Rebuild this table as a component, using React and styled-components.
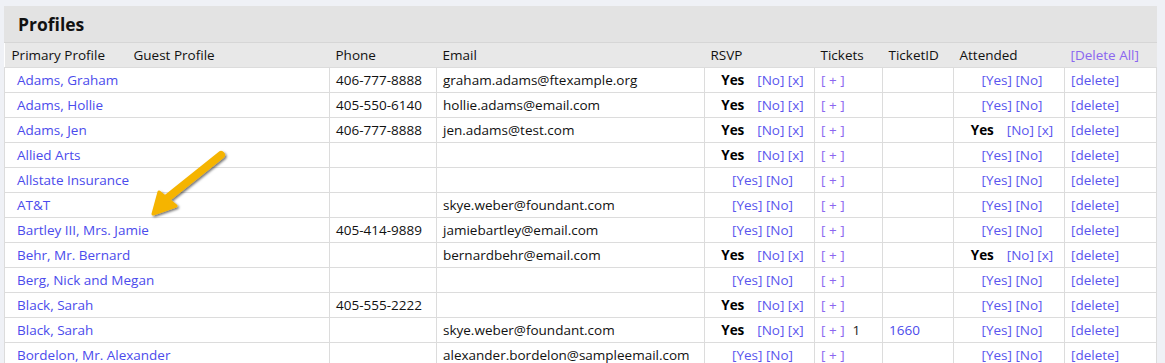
import React from 'react';
import styled, { createGlobalStyle } from 'styled-components';

const GlobalStyle = createGlobalStyle`
  html, body {
    margin: 0;
    padding: 0;
    background: #eff1f6;
    font-family: "Open Sans", "Noto Sans", sans-serif;
    font-size: 13.5px;
    color: #111;
  }
`;

const rows = [
  { name: 'Adams, Graham', phone: '406-777-8888', email: 'graham.adams@ftexample.org', rsvp: 'yes', att: 'open' },
  { name: 'Adams, Hollie', phone: '405-550-6140', email: 'hollie.adams@email.com', rsvp: 'yes', att: 'open' },
  { name: 'Adams, Jen', phone: '406-777-8888', email: 'jen.adams@test.com', rsvp: 'yes', att: 'yes' },
  { name: 'Allied Arts', phone: '', email: '', rsvp: 'yes', att: 'open' },
  { name: 'Allstate Insurance', phone: '', email: '', rsvp: 'open', att: 'open' },
  { name: 'AT&T', phone: '', email: 'skye.weber@foundant.com', rsvp: 'open', att: 'open' },
  { name: 'Bartley III, Mrs. Jamie', phone: '405-414-9889', email: 'jamiebartley@email.com', rsvp: 'open', att: 'open' },
  { name: 'Behr, Mr. Bernard', phone: '', email: 'bernardbehr@email.com', rsvp: 'yes', att: 'yes' },
  { name: 'Berg, Nick and Megan', phone: '', email: '', rsvp: 'open', att: 'open' },
  { name: 'Black, Sarah', phone: '405-555-2222', email: '', rsvp: 'yes', att: 'open' },
  { name: 'Black, Sarah', phone: '', email: 'skye.weber@foundant.com', rsvp: 'yes', att: 'open', tickets: '1', ticketId: '1660' },
  { name: 'Bordelon, Mr. Alexander', phone: '', email: 'alexander.bordelon@sampleemail.com', rsvp: 'open', att: 'open' },
];

const Page = styled.div`
  padding: 6px 8px 0 4px;
  position: relative;
`;

const Panel = styled.section`
  background: #fff;
  width: 1153px;
`;

const TitleBar = styled.div`
  background: #e3e3e3;
  height: 36px;
  display: flex;
  align-items: center;
  padding-left: 14px;
  border-bottom: 1px solid #d6d6d6;

  h1 {
    margin: 0;
    font-size: 17.5px;
    font-weight: 700;
    color: #111;
  }
`;

const Table = styled.table`
  width: 100%;
  border-collapse: collapse;
  table-layout: fixed;
`;

const Th = styled.th`
  background: #e8e8e8;
  font-weight: 400;
  text-align: left;
  height: 24px;
  padding: 0 0 0 ${p => p.$pad || 6}px;
  white-space: nowrap;
`;

const Td = styled.td`
  height: 24px;
  border: 1px solid #dcdcdc;
  padding: 0 0 0 ${p => p.$pad || 6}px;
  text-align: ${p => p.$center ? 'center' : 'left'};
  white-space: nowrap;
  overflow: hidden;
`;

const Link = styled.a`
  color: #4b4bec;
  text-decoration: none;
  cursor: pointer;
`;

const Bracket = styled(Link)`
  color: ${p => p.$purple ? '#8a66f0' : '#5a55ee'};
`;

const Yes = styled.b`
  display: inline-block;
  width: 36px;
  text-align: left;
  color: #000;
`;

const Plain = styled.span`
  margin-left: 8px;
  color: #222;
`;

const Arrow = styled.svg`
  position: absolute;
  left: 140px;
  top: 142px;
  pointer-events: none;
`;

const Choice = ({ value }) =>
  value === 'yes' ? (
    <>
      <Yes>Yes</Yes>
      <Bracket>[No]</Bracket> <Bracket>[x]</Bracket>
    </>
  ) : (
    <>
      <Bracket>[Yes]</Bracket> <Bracket>[No]</Bracket>
    </>
  );

export default function App() {
  return (
    <>
      <GlobalStyle />
      <Page>
        <Panel>
          <TitleBar>
            <h1>Profiles</h1>
          </TitleBar>
          <Table>
            <colgroup>
              <col style={{ width: 122 }} />
              <col style={{ width: 203 }} />
              <col style={{ width: 107 }} />
              <col style={{ width: 268 }} />
              <col style={{ width: 110 }} />
              <col style={{ width: 68 }} />
              <col style={{ width: 71 }} />
              <col style={{ width: 111 }} />
              <col />
            </colgroup>
            <thead>
              <tr>
                <Th $pad={7}>Primary Profile</Th>
                <Th $pad={7}>Guest Profile</Th>
                <Th>Phone</Th>
                <Th>Email</Th>
                <Th>RSVP</Th>
                <Th>Tickets</Th>
                <Th>TicketID</Th>
                <Th>Attended</Th>
                <Th><Bracket $purple>[Delete All]</Bracket></Th>
              </tr>
            </thead>
            <tbody>
              {rows.map((r, i) => (
                <tr key={i}>
                  <Td colSpan={2} $pad={12}><Link>{r.name}</Link></Td>
                  <Td>{r.phone}</Td>
                  <Td>{r.email}</Td>
                  <Td $center><Choice value={r.rsvp} /></Td>
                  <Td>
                    <Bracket $purple>[ + ]</Bracket>
                    {r.tickets && <Plain>{r.tickets}</Plain>}
                  </Td>
                  <Td $pad={6}>{r.ticketId && <Link>{r.ticketId}</Link>}</Td>
                  <Td $center><Choice value={r.att} /></Td>
                  <Td><Bracket>[delete]</Bracket></Td>
                </tr>
              ))}
            </tbody>
          </Table>
        </Panel>
        <Arrow width="100" height="80" viewBox="0 0 100 80">
          <defs>
            <filter id="sh" x="-20%" y="-20%" width="140%" height="140%">
              <feDropShadow dx="1.5" dy="1.5" stdDeviation="1.2" floodColor="#000" floodOpacity="0.55" />
            </filter>
          </defs>
          <g filter="url(#sh)">
            <line x1="81" y1="13" x2="26" y2="57" stroke="#f5b400" strokeWidth="8" strokeLinecap="round" />
            <polygon points="13,72 19,50 36,64" fill="#f5b400" stroke="#f5b400" strokeWidth="3" strokeLinejoin="round" />
          </g>
        </Arrow>
      </Page>
    </>
  );
}
